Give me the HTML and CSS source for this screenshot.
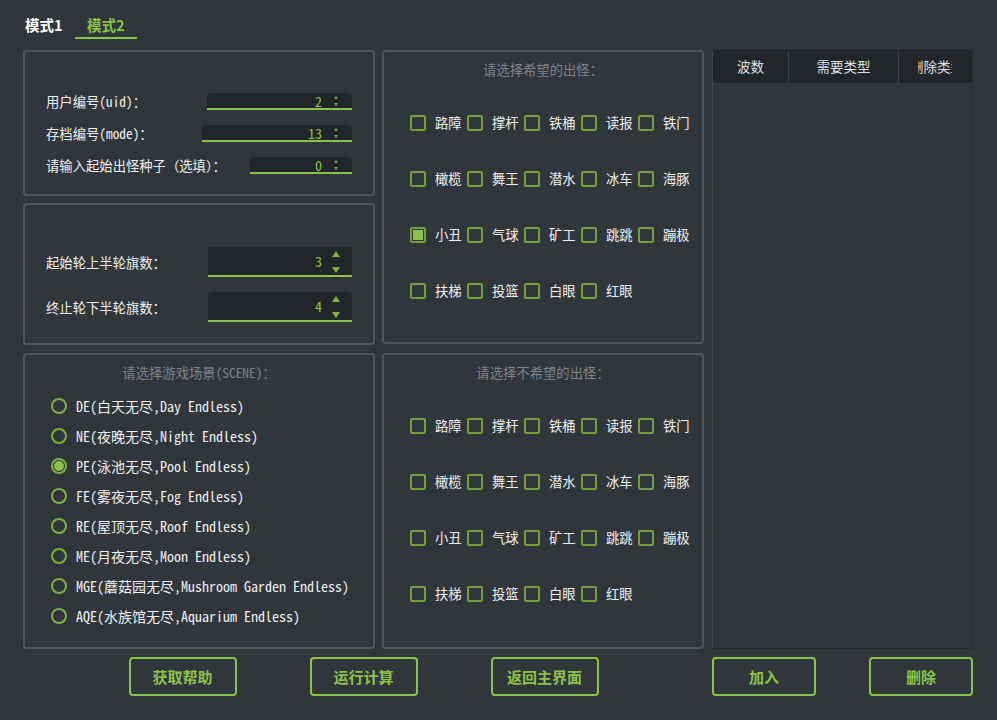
FILE: index.html
```html
<!DOCTYPE html>
<html lang="zh-CN">
<head>
<meta charset="utf-8">
<title>出怪计算</title>
<link rel="stylesheet" href="styles.css">
</head>
<body>
<div class="app">
  <nav class="tabs">
    <div class="tab">模式1</div>
    <div class="tab active">模式2</div>
  </nav>

  <main class="main">
    <div class="col col-left">
      <section class="panel panel-ids">
        <div class="form-row">
          <span class="label">用户编号(uid)：</span>
          <div class="spin spin-sm w145"><span class="val">2</span><span class="arrows"><i class="up"></i><i class="down"></i></span></div>
        </div>
        <div class="form-row">
          <span class="label">存档编号(mode)：</span>
          <div class="spin spin-sm w150"><span class="val">13</span><span class="arrows"><i class="up"></i><i class="down"></i></span></div>
        </div>
        <div class="form-row">
          <span class="label">请输入起始出怪种子（选填）：</span>
          <div class="spin spin-sm w102"><span class="val">0</span><span class="arrows"><i class="up"></i><i class="down"></i></span></div>
        </div>
      </section>

      <section class="panel panel-flags">
        <div class="form-row form-row-lg">
          <span class="label">起始轮上半轮旗数：</span>
          <div class="spin spin-lg w144"><span class="val">3</span><span class="arrows"><i class="up"></i><i class="down"></i></span></div>
        </div>
        <div class="form-row form-row-lg">
          <span class="label">终止轮下半轮旗数：</span>
          <div class="spin spin-lg w144"><span class="val">4</span><span class="arrows"><i class="up"></i><i class="down"></i></span></div>
        </div>
      </section>

      <section class="panel panel-scene">
        <h2 class="panel-title">请选择游戏场景(SCENE)：</h2>
        <ul class="radio-list">
          <li class="radio-row"><span class="radio"></span>DE(白天无尽,Day Endless)</li>
          <li class="radio-row"><span class="radio"></span>NE(夜晚无尽,Night Endless)</li>
          <li class="radio-row"><span class="radio checked"></span>PE(泳池无尽,Pool Endless)</li>
          <li class="radio-row"><span class="radio"></span>FE(雾夜无尽,Fog Endless)</li>
          <li class="radio-row"><span class="radio"></span>RE(屋顶无尽,Roof Endless)</li>
          <li class="radio-row"><span class="radio"></span>ME(月夜无尽,Moon Endless)</li>
          <li class="radio-row"><span class="radio"></span>MGE(蘑菇园无尽,Mushroom Garden Endless)</li>
          <li class="radio-row"><span class="radio"></span>AQE(水族馆无尽,Aquarium Endless)</li>
        </ul>
      </section>
    </div>

    <div class="col col-mid">
      <section class="panel panel-zombies">
        <h2 class="panel-title">请选择希望的出怪：</h2>
        <div class="check-grid">
          <label class="check-item"><span class="box"></span>路障</label>
          <label class="check-item"><span class="box"></span>撑杆</label>
          <label class="check-item"><span class="box"></span>铁桶</label>
          <label class="check-item"><span class="box"></span>读报</label>
          <label class="check-item"><span class="box"></span>铁门</label>
          <label class="check-item"><span class="box"></span>橄榄</label>
          <label class="check-item"><span class="box"></span>舞王</label>
          <label class="check-item"><span class="box"></span>潜水</label>
          <label class="check-item"><span class="box"></span>冰车</label>
          <label class="check-item"><span class="box"></span>海豚</label>
          <label class="check-item"><span class="box checked"></span>小丑</label>
          <label class="check-item"><span class="box"></span>气球</label>
          <label class="check-item"><span class="box"></span>矿工</label>
          <label class="check-item"><span class="box"></span>跳跳</label>
          <label class="check-item"><span class="box"></span>蹦极</label>
          <label class="check-item"><span class="box"></span>扶梯</label>
          <label class="check-item"><span class="box"></span>投篮</label>
          <label class="check-item"><span class="box"></span>白眼</label>
          <label class="check-item"><span class="box"></span>红眼</label>
        </div>
      </section>

      <section class="panel panel-zombies panel-unwanted">
        <h2 class="panel-title">请选择不希望的出怪：</h2>
        <div class="check-grid">
          <label class="check-item"><span class="box"></span>路障</label>
          <label class="check-item"><span class="box"></span>撑杆</label>
          <label class="check-item"><span class="box"></span>铁桶</label>
          <label class="check-item"><span class="box"></span>读报</label>
          <label class="check-item"><span class="box"></span>铁门</label>
          <label class="check-item"><span class="box"></span>橄榄</label>
          <label class="check-item"><span class="box"></span>舞王</label>
          <label class="check-item"><span class="box"></span>潜水</label>
          <label class="check-item"><span class="box"></span>冰车</label>
          <label class="check-item"><span class="box"></span>海豚</label>
          <label class="check-item"><span class="box"></span>小丑</label>
          <label class="check-item"><span class="box"></span>气球</label>
          <label class="check-item"><span class="box"></span>矿工</label>
          <label class="check-item"><span class="box"></span>跳跳</label>
          <label class="check-item"><span class="box"></span>蹦极</label>
          <label class="check-item"><span class="box"></span>扶梯</label>
          <label class="check-item"><span class="box"></span>投篮</label>
          <label class="check-item"><span class="box"></span>白眼</label>
          <label class="check-item"><span class="box"></span>红眼</label>
        </div>
      </section>
    </div>

    <div class="col col-right">
      <div class="table">
        <div class="thead">
          <div class="th th-wave">波数</div>
          <div class="th th-type">需要类型</div>
          <div class="th th-del"><span class="clip"><span class="clip-text">删除类型</span></span></div>
        </div>
        <div class="tbody"></div>
      </div>
    </div>
  </main>

  <footer class="actions">
    <div class="actions-left">
      <button class="btn">获取帮助</button>
      <button class="btn">运行计算</button>
      <button class="btn">返回主界面</button>
    </div>
    <div class="actions-right">
      <button class="btn btn-sm">加入</button>
      <button class="btn btn-sm">删除</button>
    </div>
  </footer>
</div>
</body>
</html>
```

FILE: styles.css
```css
* {
  box-sizing: border-box;
  margin: 0;
  padding: 0;
}

html, body {
  background: #31363b;
}

body {
  width: 997px;
  height: 720px;
  overflow: hidden;
  color: #eff0f1;
  font-family: "Noto Sans Mono CJK SC", "Noto Sans CJK SC", "DejaVu Sans Mono", monospace;
  font-size: 13.33px;
}

/* ---------- tabs ---------- */
.tabs {
  display: flex;
  height: 39px;
  padding-left: 13px;
}

.tab {
  width: 62px;
  height: 39px;
  padding: 16px 0 0 12px;
  line-height: 18px;
  font-family: "Noto Sans CJK SC", sans-serif;
  font-size: 14.5px;
  font-weight: bold;
  color: #ffffff;
  border-bottom: 2px solid transparent;
}

.tab.active {
  color: #8bc34a;
  border-bottom-color: #8bc34a;
}

/* ---------- main layout ---------- */
.main {
  display: flex;
  height: 599px;
  margin-top: 11px;
  padding-left: 23px;
}

.col {
  display: flex;
  flex-direction: column;
}

.col-left {
  width: 352px;
  margin-right: 7px;
}

.col-mid {
  width: 322px;
  margin-right: 8px;
}

.col-right {
  width: 261px;
}

.panel {
  border: 2px solid #4f575e;
  border-radius: 4px;
}

.panel-title {
  font-weight: normal;
  font-size: 13.33px;
  line-height: 20px;
  text-align: center;
  color: #7f8387;
}

/* ---------- id panel ---------- */
.panel-ids {
  height: 146px;
  padding: 41px 21px 0;
}

.panel-flags {
  height: 142px;
  margin-top: 7px;
  padding: 42px 21px 0;
}

.form-row {
  display: flex;
  justify-content: space-between;
  align-items: center;
  height: 17px;
  margin-bottom: 15px;
}

.form-row-lg {
  height: 30px;
}

.label {
  line-height: 17px;
  white-space: nowrap;
}

.spin {
  display: flex;
  align-items: stretch;
  background: #232629;
  border-bottom: 2px solid #8bc34a;
  border-radius: 4px 4px 0 0;
}

.spin-sm { height: 17px; }
.spin-lg { height: 30px; }

.w145 { width: 145px; }
.w150 { width: 150px; }
.w102 { width: 102px; }
.w144 { width: 144px; }

.val {
  flex: 1;
  text-align: right;
  color: #8bc34a;
  font-size: 14px;
  display: flex;
  align-items: center;
  justify-content: flex-end;
}

.arrows {
  width: 16px;
  margin: 0 8px 0 6px;
  display: flex;
  flex-direction: column;
  align-items: center;
  justify-content: space-between;
}

.spin-sm .arrows {
  padding: 3px 0 2px;
}

.spin-sm .up {
  width: 0;
  height: 0;
  border-left: 2px solid transparent;
  border-right: 2px solid transparent;
  border-bottom: 3px solid #7a9a52;
}

.spin-sm .down {
  width: 0;
  height: 0;
  border-left: 2px solid transparent;
  border-right: 2px solid transparent;
  border-top: 3px solid #7a9a52;
}

.spin-lg .arrows {
  padding: 4px 0 2px;
}

.spin-lg .up {
  width: 0;
  height: 0;
  border-left: 4px solid transparent;
  border-right: 4px solid transparent;
  border-bottom: 6px solid #7fae45;
}

.spin-lg .down {
  width: 0;
  height: 0;
  border-left: 4px solid transparent;
  border-right: 4px solid transparent;
  border-top: 6px solid #7fae45;
}

/* ---------- scene panel ---------- */
.panel-scene {
  height: 296px;
  margin-top: 8px;
  padding-top: 8px;
}

.radio-list {
  list-style: none;
  margin-top: 8px;
  padding-left: 26px;
}

.radio-row {
  display: flex;
  align-items: center;
  height: 30px;
  font-size: 14px;
  white-space: nowrap;
}

.radio {
  width: 16px;
  height: 16px;
  margin-right: 9px;
  border: 2px solid #7fae45;
  border-radius: 50%;
  flex: none;
  display: flex;
  align-items: center;
  justify-content: center;
}

.radio.checked::after {
  content: "";
  width: 10px;
  height: 10px;
  border-radius: 50%;
  background: #8bc34a;
}

/* ---------- zombie panels ---------- */
.panel-zombies {
  height: 294px;
  padding-top: 8px;
}

.panel-unwanted {
  height: 296px;
  margin-top: 9px;
}

.check-grid {
  display: grid;
  grid-template-columns: repeat(5, 57px);
  grid-auto-rows: 56px;
  align-items: center;
  margin-top: 15px;
  padding-left: 26px;
}

.check-item {
  display: flex;
  align-items: center;
  white-space: nowrap;
  font-family: "Noto Sans CJK SC", sans-serif;
  font-size: 13.33px;
  line-height: 16px;
}

.box {
  width: 16px;
  height: 16px;
  margin-right: 9px;
  border: 2px solid #739d3e;
  border-radius: 2px;
  flex: none;
  display: flex;
  align-items: center;
  justify-content: center;
}

.box.checked::after {
  content: "";
  width: 10px;
  height: 10px;
  background: #8bc34a;
}

/* ---------- table ---------- */
.table {
  height: 600px;
  margin-top: -1px;
  border: 1px solid #262a2e;
  border-left-color: #41474d;
  border-radius: 3px 3px 0 0;
  background: #31363b;
  overflow: hidden;
}

.thead {
  display: flex;
  height: 33px;
  background: #232629;
}

.th {
  display: flex;
  align-items: center;
  justify-content: center;
  padding-bottom: 2px;
  font-family: "Noto Sans CJK SC", sans-serif;
  font-size: 13.5px;
  color: #dde1e4;
  white-space: nowrap;
}

.th-wave {
  width: 76px;
  border-right: 1px solid #3a3f44;
}

.th-type {
  width: 110px;
  border-right: 1px solid #3a3f44;
}

.th-del {
  flex: 1;
  justify-content: flex-start;
  padding-left: 19px;
}

.clip {
  display: block;
  width: 34px;
  overflow: hidden;
}

.clip-text {
  display: block;
  margin-left: -8px;
}

/* ---------- actions ---------- */
.actions {
  display: flex;
  height: 39px;
  margin-top: 8px;
}

.actions-left {
  width: 681px;
  margin-left: 23px;
  display: flex;
  justify-content: center;
  gap: 73px;
}

.actions-right {
  width: 261px;
  margin-left: 8px;
  display: flex;
  justify-content: space-between;
}

.btn {
  width: 108px;
  height: 39px;
  border: 2px solid #8bc34a;
  border-radius: 4px;
  background: transparent;
  color: #8bc34a;
  font-family: "Noto Sans CJK SC", sans-serif;
  font-size: 15px;
  font-weight: bold;
  display: flex;
  align-items: center;
  justify-content: center;
}

.btn-sm {
  width: 104px;
}
```
